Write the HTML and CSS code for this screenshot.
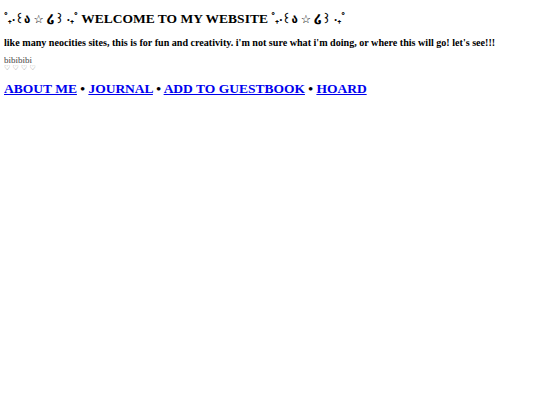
FILE: index.html
```html
<!DOCTYPE html>
<html>
<head>
<meta charset="utf-8">
<link rel="stylesheet" href="styles.css">
</head>
<body>
<h1 class="title"><span class="deco">˚₊‧꒰ა ☆ ໒꒱ ‧₊˚</span> WELCOME TO MY WEBSITE <span class="deco">˚₊‧꒰ა ☆ ໒꒱ ‧₊˚</span></h1>
<h3 class="intro">like many neocities sites, this is for fun and creativity. i'm not sure what i'm doing, or where this will go! let's see!!!</h3>
<div class="small">bibibibi</div>
<div class="hearts">♡ ♡ ♡ ♡</div>
<h1 class="nav"><a href="#">ABOUT ME</a> • <a href="#">JOURNAL</a> • <a href="#">ADD TO GUESTBOOK</a> • <a href="#">HOARD</a></h1>
</body>
</html>
```
FILE: styles.css
```css
body {
  margin: 4px;
  font-family: "Liberation Serif", "Noto Sans", "DejaVu Sans", serif;
  color: #000;
  background: #fff;
}
.title {
  font-size: 13.5px;
  margin: 5px 0 0 0;
  line-height: 20px;
}
.deco {
  font-family: "Noto Sans", "DejaVu Sans", sans-serif;
  font-weight: bold;
  font-size: 11.5px;
}
.intro {
  font-size: 10.1px;
  margin: 7px 0 0 0;
  line-height: 13px;
}
.small {
  font-size: 9px;
  margin-top: 8px;
  line-height: 7px;
  color: #444;
}
.hearts {
  font-family: "DejaVu Sans", sans-serif;
  font-size: 7px;
  line-height: 9px;
  color: #777;
}
.nav {
  font-size: 13.5px;
  margin: 6px 0 0 0;
  line-height: 20px;
}
.nav a {
  color: #0000ee;
}
```
